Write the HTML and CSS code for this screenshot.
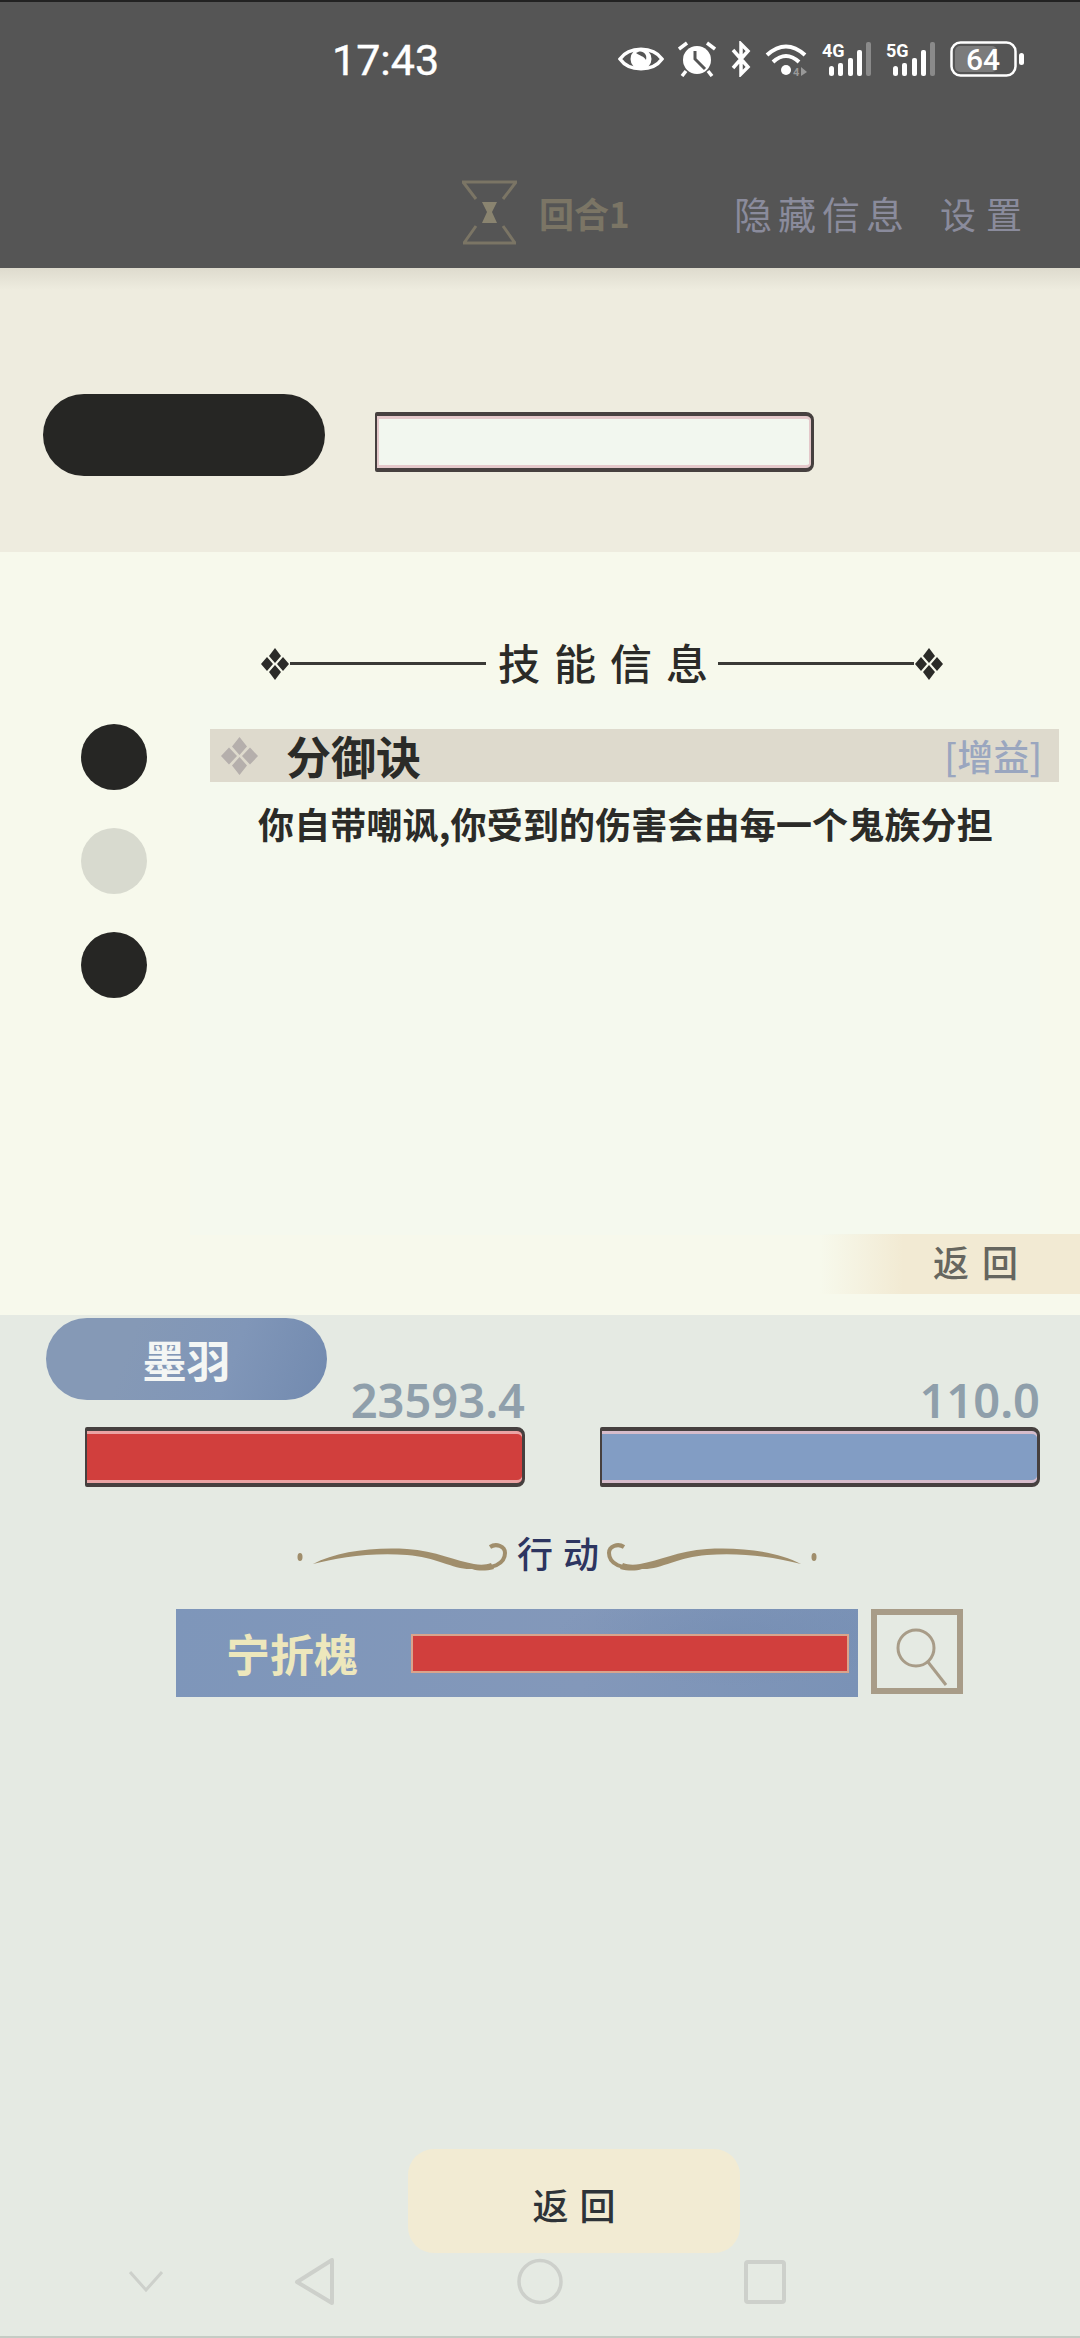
FILE: index.html
```html
<!DOCTYPE html>
<html lang="zh">
<head>
<meta charset="utf-8">
<title>技能信息</title>
<link rel="stylesheet" href="styles.css">
</head>
<body>
<div class="screen">
  <header class="topbar">
    <div class="status">
      <span class="time">17:43</span>
      <div class="status-icons">
        <svg width="46" height="36" viewBox="0 0 46 36"><path d="M2 18C11 5 35 5 44 18C35 31 11 31 2 18Z" fill="none" stroke="#fff" stroke-width="3.5"/><circle cx="23" cy="18" r="10.5" fill="#fff"/><path d="M18 12C23 8 30 12 28 19C26 15 22 15 18 12Z" fill="#555"/></svg>
        <svg width="38" height="36" viewBox="0 0 38 36"><circle cx="19" cy="19" r="14" fill="#fff"/><path d="M1 8L9 2M37 8L29 2M8 30L4 35M30 30L34 35" stroke="#fff" stroke-width="3.5" fill="none"/><path d="M17 10V18L27 28" stroke="#555" stroke-width="3" fill="none"/></svg>
        <svg width="21" height="36" viewBox="0 0 21 36"><path d="M3 9L18 26L11 33V3L18 10L3 27" fill="none" stroke="#fff" stroke-width="3.5"/></svg>
        <svg width="43" height="36" viewBox="0 0 43 36"><path d="M2 14Q21 -3 40 14M8 21Q21 9 34 21" fill="none" stroke="#fff" stroke-width="4"/><circle cx="21" cy="29" r="5" fill="#fff"/><text x="28" y="35" class="tiny">4</text><path d="M36 26L42 31L36 35Z" fill="#999"/></svg>
        <svg width="50" height="36" viewBox="0 0 50 36"><text x="0" y="16" class="net">4G</text><rect x="7" y="25" width="5" height="10" rx="2.5" fill="#fff"/><rect x="16" y="22" width="5" height="13" rx="2" fill="#fff"/><rect x="26" y="17" width="5" height="18" rx="2" fill="#fff"/><rect x="35" y="9" width="5" height="26" rx="2" fill="#fff"/><rect x="44" y="1" width="5" height="34" rx="2" fill="#8a8a8a"/></svg>
        <svg width="50" height="36" viewBox="0 0 50 36"><text x="0" y="16" class="net">5G</text><rect x="7" y="25" width="5" height="10" rx="2.5" fill="#fff"/><rect x="16" y="22" width="5" height="13" rx="2" fill="#fff"/><rect x="26" y="17" width="5" height="18" rx="2" fill="#fff"/><rect x="35" y="9" width="5" height="26" rx="2" fill="#fff"/><rect x="44" y="1" width="5" height="34" rx="2" fill="#8a8a8a"/></svg>
        <svg width="74" height="36" viewBox="0 0 74 36"><rect x="5" y="5" width="42" height="26" rx="5" fill="#7b7b7b"/><rect x="1.5" y="1.5" width="64" height="33" rx="9" fill="none" stroke="#fff" stroke-width="2.5"/><text x="33" y="29" class="batt">64</text><rect x="69" y="12" width="5" height="12" rx="2.5" fill="#fff"/></svg>
      </div>
    </div>
    <div class="gamebar">
      <svg class="hourglass" width="55" height="65" viewBox="0 0 55 65"><path d="M0 2H55M1 2L14 19M54 2L41 19M14 46L2 63M41 46L53 63M1 63H54" fill="none" stroke="#7b7565" stroke-width="3"/><path d="M20 22H35L30 32L35 43H20L25 32Z" fill="#8a8470"/></svg>
      <span class="round">回合1</span>
      <span class="link-hide">隐藏信息</span>
      <span class="link-set">设置</span>
    </div>
  </header>

  <section class="player-strip">
    <div class="dark-pill"></div>
    <div class="gauge blank"></div>
  </section>

  <section class="skills">
    <div class="skills-title">
      <svg width="30" height="32" viewBox="0 0 30 32"><path class="ink" d="M15 0L21 8L15 15L9 8ZM15 17L21 24L15 32L9 24ZM7 9L13 16L7 23L1 16ZM23 9L29 16L23 23L17 16Z"/></svg>
      <span class="title-line"></span>
      <h2 class="title-text">技能信息</h2>
      <span class="title-line"></span>
      <svg width="30" height="32" viewBox="0 0 30 32"><path class="ink" d="M15 0L21 8L15 15L9 8ZM15 17L21 24L15 32L9 24ZM7 9L13 16L7 23L1 16ZM23 9L29 16L23 23L17 16Z"/></svg>
    </div>
    <div class="skills-body">
      <div class="dots">
        <span class="dot"></span>
        <span class="dot off"></span>
        <span class="dot"></span>
      </div>
      <div class="skill-panel">
        <div class="skill-head">
          <svg width="39" height="38" viewBox="0 0 39 38"><path class="diamond" d="M19.500 0L27 9.500L19.500 18L12 9.500ZM19.500 20L27 28.500L19.500 38L12 28.500ZM9 10.500L17 19L9 27.500L1 19ZM30 10.500L38 19L30 27.500L22 19Z"/></svg>
          <span class="skill-name">分御诀</span>
          <span class="skill-tag">[增益]</span>
        </div>
        <p class="skill-desc">你自带嘲讽,你受到的伤害会由每一个鬼族分担</p>
      </div>
    </div>
    <div class="back-small">返回</div>
  </section>

  <section class="battle">
    <div class="name-pill">墨羽</div>
    <div class="stats">
      <div class="stat">
        <div class="stat-value">23593.4</div>
        <div class="gauge hp"></div>
      </div>
      <div class="stat">
        <div class="stat-value">110.0</div>
        <div class="gauge mp"></div>
      </div>
    </div>
    <div class="action-title">
      <svg class="flourish" width="218" height="40" viewBox="0 0 218 40"><ellipse cx="4" cy="21" rx="2.500" ry="4"/><path d="M17 28C40 16 75 11 111 13C140 15 160 25 178 28C184 29 190 29 195 27L198 33C190 35 182 35 176 33C158 34 140 21 111 19C75 16 40 22 17 28Z"/><path class="curl" d="M178 31C196 34 209 28 209 17C209 10 200 7 194 11"/></svg>
      <span class="action-text">行动</span>
      <svg class="flourish mirror" width="218" height="40" viewBox="0 0 218 40"><ellipse cx="4" cy="21" rx="2.500" ry="4"/><path d="M17 28C40 16 75 11 111 13C140 15 160 25 178 28C184 29 190 29 195 27L198 33C190 35 182 35 176 33C158 34 140 21 111 19C75 16 40 22 17 28Z"/><path class="curl" d="M178 31C196 34 209 28 209 17C209 10 200 7 194 11"/></svg>
    </div>
    <div class="target-row">
      <div class="target">
        <span class="target-name">宁折槐</span>
        <span class="target-bar"></span>
      </div>
      <div class="search-box">
        <svg width="60" height="64" viewBox="0 0 60 64"><circle cx="25" cy="23" r="18" fill="none" stroke="#a89c88" stroke-width="3"/><path d="M37 37L55 60" stroke="#a89c88" stroke-width="3"/></svg>
      </div>
    </div>
    <button class="back-main">返回</button>
    <nav class="sysnav">
      <svg class="nav-chevron" width="34" height="47" viewBox="0 0 34 47"><path d="M1 14L17 32L33 14" fill="none" stroke="#cdd0cb" stroke-width="3"/></svg>
      <svg class="nav-back" width="41" height="47" viewBox="0 0 41 47"><path d="M38 2V45L3 24Z" fill="none" stroke="#cdd0cb" stroke-width="4" stroke-linejoin="round"/></svg>
      <svg class="nav-home" width="46" height="47" viewBox="0 0 46 47"><circle cx="23" cy="23.500" r="21" fill="none" stroke="#cdd0cb" stroke-width="3.500"/></svg>
      <svg class="nav-recent" width="42" height="47" viewBox="0 0 42 47"><rect x="2" y="4" width="38" height="40" rx="2" fill="none" stroke="#cdd0cb" stroke-width="4"/></svg>
    </nav>
  </section>
</div>
</body>
</html>
```
FILE: styles.css
```css
* { box-sizing: border-box; }
html, body { margin: 0; padding: 0; }
body {
  width: 1080px;
  height: 2338px;
  overflow: hidden;
  font-family: "Noto Sans CJK SC", "Noto Sans", sans-serif;
}
.screen { width: 1080px; height: 2338px; display: flex; flex-direction: column; }

/* top bar */
.topbar { height: 268px; background: #555; border-top: 2px solid #222; }
.status {
  display: flex;
  justify-content: space-between;
  align-items: center;
  height: 36px;
  margin-top: 39px;
  padding: 0 56px 0 332px;
}
.time { font-family: Roboto, sans-serif; font-size: 43px; line-height: 40px; color: #fff; margin-top: 2px; -webkit-text-stroke: 0.4px #fff; }
.status-icons { display: flex; gap: 14px; }
.status-icons svg { display: block; }
.net { font: 700 18px Roboto, sans-serif; fill: #fff; }
.tiny { font: 700 11px Roboto, sans-serif; fill: #999; }
.batt { font: 500 30px Roboto, sans-serif; fill: #fff; text-anchor: middle; }
.gamebar { display: flex; align-items: center; height: 65px; margin-top: 103px; padding-left: 462px; }
.hourglass { margin-right: 22px; flex: none; }
.round { font-size: 35px; font-weight: 700; line-height: 40px; color: #7b7565; width: 196px; white-space: nowrap; }
.link-hide { font-size: 38px; line-height: 44px; letter-spacing: 6px; color: #8a8b9c; width: 207px; margin-left: -1px; }
.link-set { font-size: 36px; line-height: 44px; letter-spacing: 10px; color: #8a8b9c; margin-left: -1px; }

/* player strip */
.player-strip {
  height: 284px;
  display: flex;
  align-items: flex-start;
  gap: 50px;
  padding: 126px 0 0 43px;
  background: linear-gradient(#dedbce, #eeecdf 22px);
}
.dark-pill { width: 282px; height: 82px; border-radius: 41px; background: #262624; }
.gauge {
  height: 60px;
  border-style: solid;
  border-color: #46403f;
  border-width: 4px 3px 4px 2px;
  border-radius: 2px 8px 8px 2px;
}
.gauge.blank {
  width: 439px;
  margin-top: 18px;
  background: #f2f7ef;
  box-shadow: inset 0 3px 0 #e4c8ca, inset 0 -3px 0 #e4c8ca, inset 2px 0 0 #e4c8ca, inset -2px 0 0 #e4c8ca;
}

/* skills */
.skills { height: 763px; padding-top: 90px; display: flex; flex-direction: column; background: #f7f9ec; }
.skills-title { display: flex; align-items: center; width: 684px; height: 43px; margin-left: 260px; }
.skills-title svg { flex: none; }
.ink { fill: #2b2b28; }
.title-line { flex: 1; height: 3px; background: #3a3a36; }
.title-text {
  margin: -5px -4px 0 12px;
  font-size: 42px;
  font-weight: 500;
  line-height: 43px;
  letter-spacing: 14px;
  color: #2b2b28;
}
.skills-body { display: flex; margin-top: 5px; height: 545px; }
.dots { display: flex; flex-direction: column; gap: 38px; width: 190px; padding: 34px 0 0 81px; flex: none; }
.dot { width: 66px; height: 66px; border-radius: 50%; background: #262624; }
.dot.off { background: #d8dacf; }
.skill-panel { width: 850px; padding: 39px 0 0 20px; background: #f5f9ee; }
.skill-head {
  display: flex;
  align-items: center;
  width: 849px;
  height: 53px;
  padding: 0 17px 0 10px;
  background: #dedacd;
}
.diamond { fill: #b5afac; }
.skill-name { margin-left: 27px; font-size: 45px; font-weight: 700; line-height: 53px; color: #2b2b28; }
.skill-tag { margin-left: auto; font-size: 36px; font-weight: 500; line-height: 53px; color: #9aa6bf; }
.skill-desc { margin: 16px 0 0 48px; font-size: 36px; font-weight: 700; line-height: 50px; letter-spacing: 0.15px; color: #2b2b28; white-space: nowrap; }
.back-small {
  align-self: flex-end;
  width: 260px;
  height: 60px;
  margin-top: -1px;
  padding-left: 113px;
  font-size: 36px;
  font-weight: 500;
  line-height: 54px;
  letter-spacing: 13px;
  color: #66665f;
  background: linear-gradient(90deg, rgba(242, 234, 211, 0), #f2ead3 32%);
}

/* battle */
.battle {
  flex: 1;
  display: flex;
  flex-direction: column;
  padding-top: 3px;
  background: #e5eae3;
  border-bottom: 2px solid #c5ccc4;
}
.name-pill {
  width: 281px;
  height: 82px;
  margin-left: 46px;
  border-radius: 41px;
  text-align: center;
  font-size: 44px;
  font-weight: 700;
  line-height: 82px;
  color: #f4f6f4;
  background: linear-gradient(110deg, #8599b6 30%, #8096b8 65%, #728aaf);
}
.stats { display: flex; gap: 75px; margin-top: -22px; padding-left: 85px; }
.stat { width: 440px; }
.stat-value {
  height: 44px;
  margin-bottom: 5px;
  text-align: right;
  font-family: "Noto Sans", sans-serif;
  font-size: 47px;
  font-weight: 600;
  line-height: 44px;
  color: #8f9fab;
}
.gauge.hp { background: #d13f3d; box-shadow: inset 0 3px 0 #eba3a3, inset 0 -3px 0 #eba3a3; }
.gauge.mp { background: #829dc4; box-shadow: inset 0 3px 0 #d6bccb, inset 0 -3px 0 #d6bccb; }
.action-title { display: flex; align-items: center; height: 40px; margin-top: 49px; padding-left: 296px; }
.flourish { flex: none; fill: #a08e6c; }
.flourish.mirror { transform: scaleX(-1); }
.curl { fill: none; stroke: #a08e6c; stroke-width: 4; }
.action-text {
  margin: -8px -9px 0 3px;
  font-size: 36px;
  font-weight: 500;
  line-height: 40px;
  letter-spacing: 10px;
  color: #2d3560;
}
.target-row { display: flex; align-items: flex-start; gap: 13px; margin-top: 33px; padding-left: 176px; }
.target {
  display: flex;
  align-items: center;
  width: 682px;
  height: 88px;
  padding: 0 9px 0 50px;
  background:
    radial-gradient(ellipse 180px 50px at 82% 30%, rgba(110, 136, 175, 0.4), transparent),
    linear-gradient(100deg, #7e96ba, #8398ba 60%, #7a92b6);
}
.target-name { width: 185px; font-size: 44px; font-weight: 700; line-height: 88px; color: #ede7bc; flex: none; }
.target-bar { flex: 1; height: 39px; background: #d13f3d; border: 2px solid #d9a48c; }
.search-box {
  display: flex;
  align-items: flex-start;
  width: 92px;
  height: 85px;
  padding: 10px 0 0 14px;
  border: 6px solid #a89c88;
}
.back-main {
  display: block;
  width: 332px;
  height: 104px;
  margin: auto 0 0 408px;
  padding: 6px 0 0 11px;
  border: 0;
  border-radius: 26px;
  font-family: inherit;
  font-size: 36px;
  font-weight: 500;
  line-height: 44px;
  letter-spacing: 11px;
  color: #2e3338;
  background: #f2ebd3;
}
.sysnav { display: flex; align-items: flex-start; height: 78px; margin-top: 5px; padding-left: 129px; }
.nav-back { margin-left: 131px; }
.nav-home { margin-left: 182px; }
.nav-recent { margin-left: 181px; }
```
